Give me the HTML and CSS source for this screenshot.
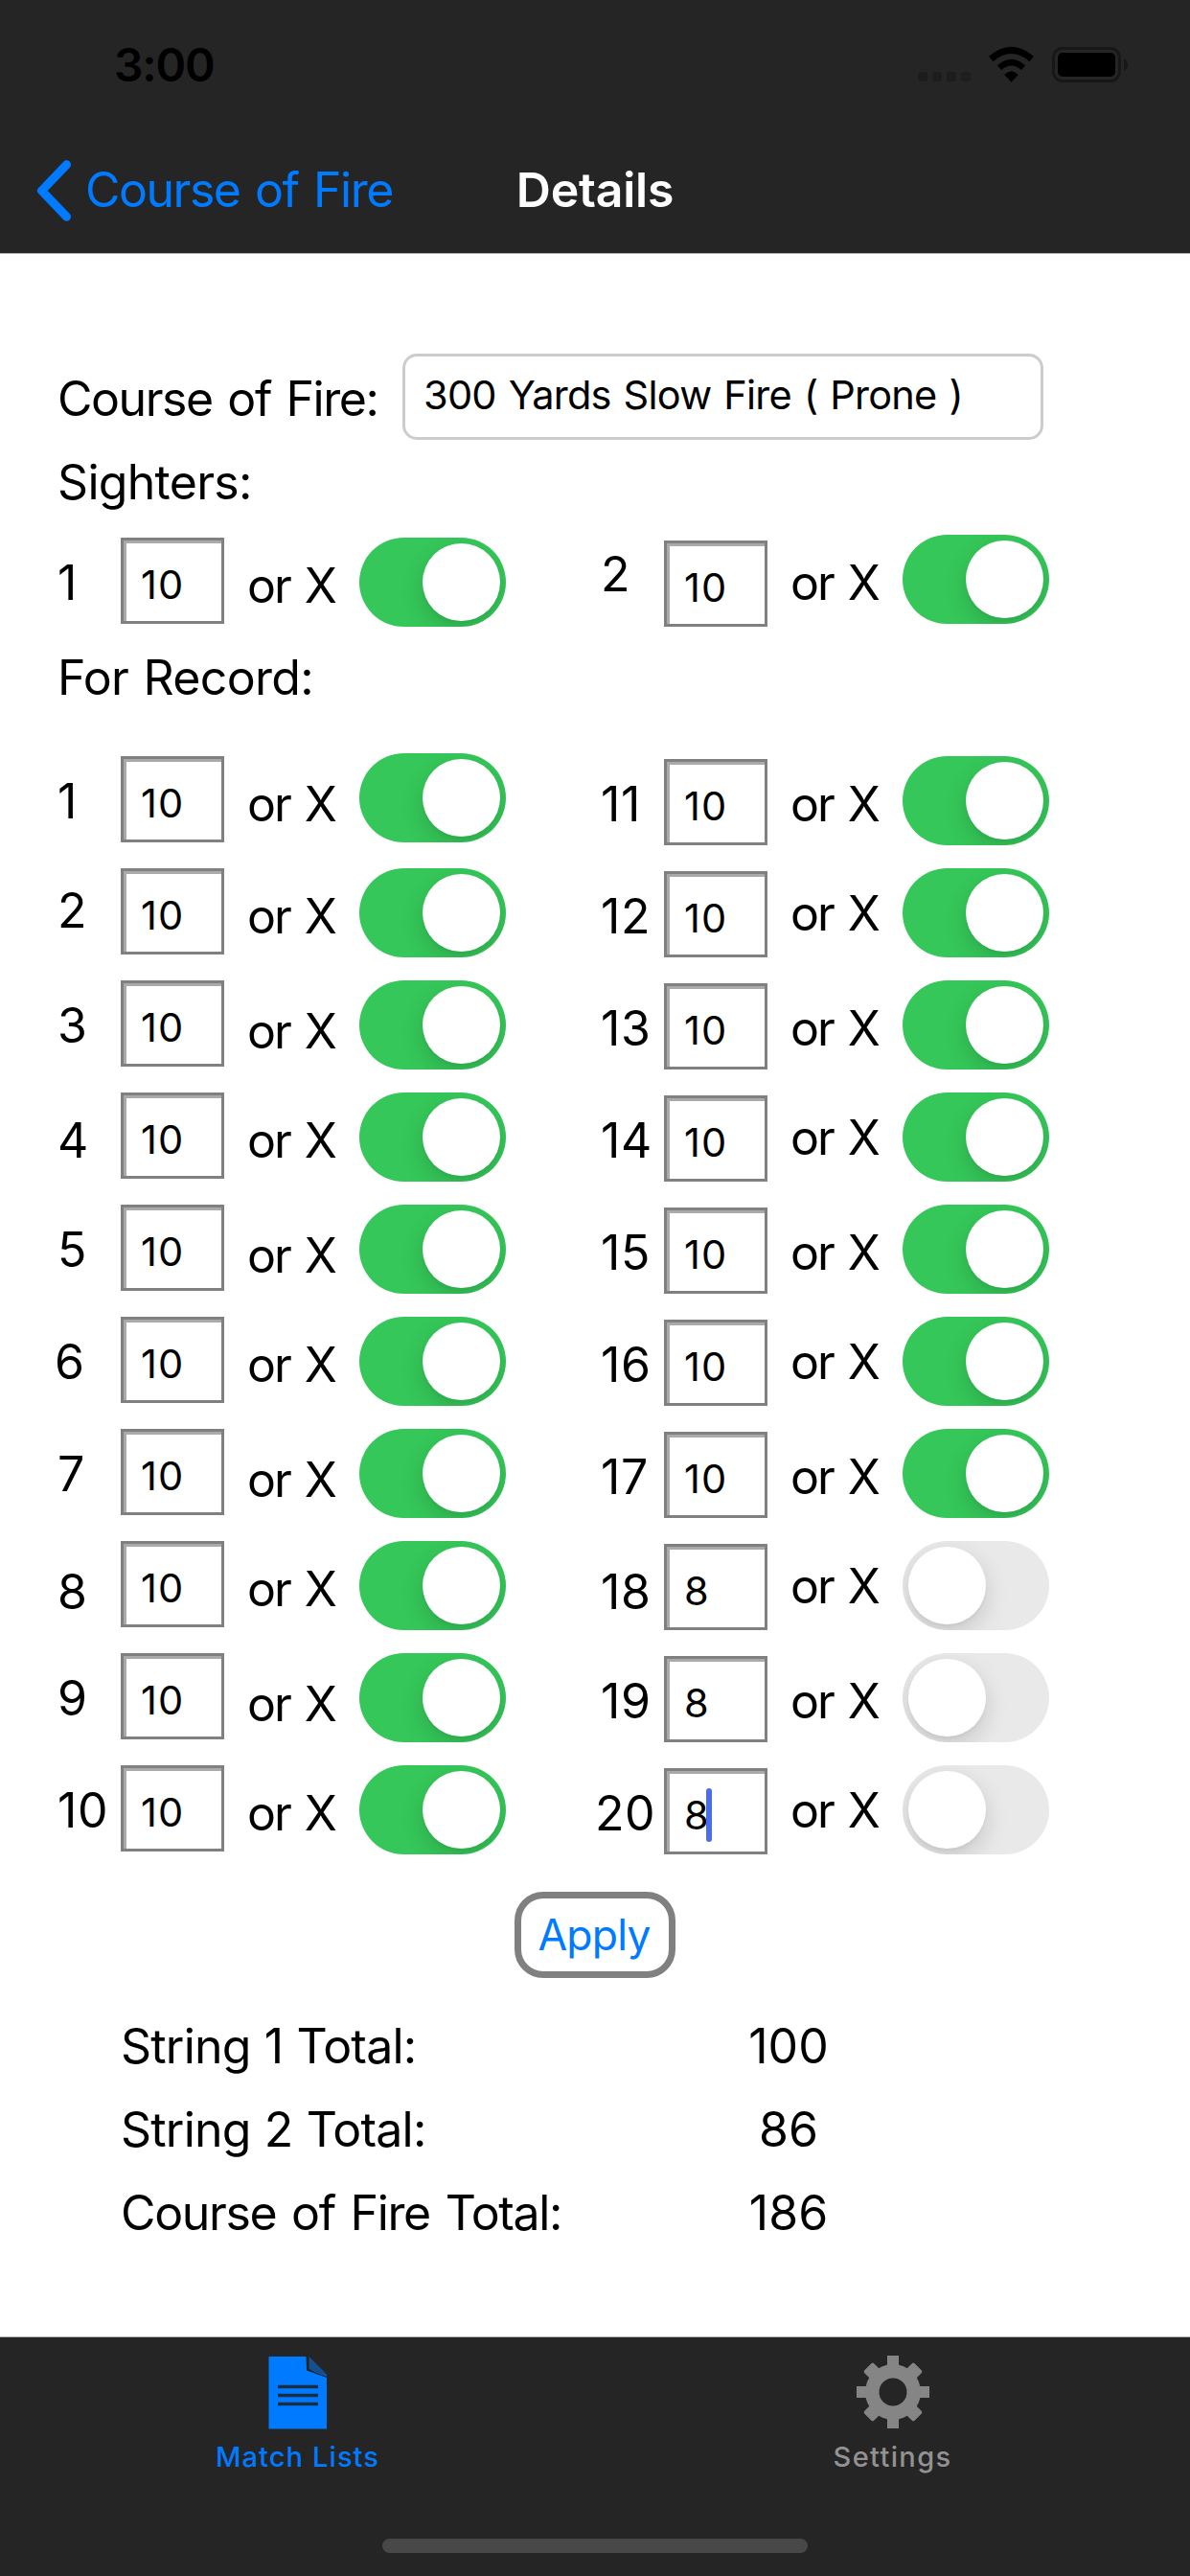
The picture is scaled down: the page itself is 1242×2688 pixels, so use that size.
FILE: index.html
```
<!DOCTYPE html>
<html lang="en">
<head>
<meta charset="utf-8">
<title>Details</title>
<link rel="stylesheet" href="styles.css">
</head>
<body>
<div class="screen">
  <header class="top">
    <div class="status">
      <span class="clock">3:00</span>
      <svg class="status-icons" width="156" height="44" viewBox="0 0 156 44">
        <g fill="#1d1d1d">
          <rect x="1" y="33" width="10" height="10" rx="3"/>
          <rect x="16" y="33" width="10" height="10" rx="3"/>
          <rect x="31" y="33" width="10" height="10" rx="3"/>
          <rect x="46" y="33" width="10" height="10" rx="3"/>
        </g>
        <path d="M98.500 43.500L91.500 36Q98.500 29.500 105.500 36Z" stroke="#000" stroke-width="0.500" stroke-linejoin="round"/>
        <path d="M86 28.700Q98.500 17.500 111 28.700" fill="none" stroke="#000" stroke-width="6.500"/>
        <path d="M77.300 19.500Q98.500 1.300 119.700 19.500" fill="none" stroke="#000" stroke-width="7"/>
      </svg>
      <svg class="battery" width="80" height="38" viewBox="0 0 80 38">
        <rect x="1.500" y="1.500" width="69" height="34" rx="9.500" fill="none" stroke="#171717" stroke-width="3"/>
        <rect x="6" y="6" width="60" height="25" rx="5"/>
        <path d="M75 12Q79 14 79 18.500Q79 23 75 25Z" fill="#171717"/>
      </svg>
    </div>
    <nav class="nav">
      <a class="back">
        <svg width="40" height="66" viewBox="0 0 40 66"><path d="M33.500 5.800L7.500 33L33.500 60.200" fill="none" stroke="#007aff" stroke-width="9" stroke-linecap="round" stroke-linejoin="round"/></svg>
        <span>Course of Fire</span>
      </a>
      <h1 class="title">Details</h1>
    </nav>
  </header>

  <main class="content">
    <div class="course">
      <label class="course-label">Course of Fire:</label>
      <div class="course-input">300 Yards Slow Fire ( Prone )</div>
    </div>
    <h2 class="heading sighters-heading">Sighters:</h2>
    <section class="columns sighters">
      <div class="col">
        <div class="shot"><span class="num">1</span><span class="field">10</span><span class="or d23">or X</span><i class="switch"></i></div>
      </div>
      <div class="col second">
        <div class="shot"><span class="num d11">2</span><span class="field">10</span><span class="or d20">or X</span><i class="switch d0"></i></div>
      </div>
    </section>
    <h2 class="heading record-heading">For Record:</h2>
    <section class="columns record">
      <div class="col">
        <div class="shot"><span class="num">1</span><span class="field">10</span><span class="or d23">or X</span><i class="switch d0"></i></div>
        <div class="shot"><span class="num d17">2</span><span class="field">10</span><span class="or d23">or X</span><i class="switch"></i></div>
        <div class="shot"><span class="num">3</span><span class="field">10</span><span class="or d26">or X</span><i class="switch"></i></div>
        <div class="shot"><span class="num d23">4</span><span class="field">10</span><span class="or d23">or X</span><i class="switch"></i></div>
        <div class="shot"><span class="num">5</span><span class="field">10</span><span class="or d26">or X</span><i class="switch"></i></div>
        <div class="shot"><span class="num out">6</span><span class="field">10</span><span class="or d23">or X</span><i class="switch"></i></div>
        <div class="shot"><span class="num">7</span><span class="field">10</span><span class="or d26">or X</span><i class="switch"></i></div>
        <div class="shot"><span class="num d26">8</span><span class="field">10</span><span class="or d23">or X</span><i class="switch"></i></div>
        <div class="shot"><span class="num">9</span><span class="field">10</span><span class="or d26">or X</span><i class="switch"></i></div>
        <div class="shot"><span class="num">10</span><span class="field">10</span><span class="or d23">or X</span><i class="switch"></i></div>
      </div>
      <div class="col second">
        <div class="shot"><span class="num d23">11</span><span class="field">10</span><span class="or d23">or X</span><i class="switch"></i></div>
        <div class="shot"><span class="num d23">12</span><span class="field">10</span><span class="or d20">or X</span><i class="switch"></i></div>
        <div class="shot"><span class="num d23">13</span><span class="field">10</span><span class="or d23">or X</span><i class="switch"></i></div>
        <div class="shot"><span class="num d23">14</span><span class="field">10</span><span class="or d20">or X</span><i class="switch"></i></div>
        <div class="shot"><span class="num d23">15</span><span class="field">10</span><span class="or d23">or X</span><i class="switch"></i></div>
        <div class="shot"><span class="num d23">16</span><span class="field">10</span><span class="or d20">or X</span><i class="switch"></i></div>
        <div class="shot"><span class="num d23">17</span><span class="field">10</span><span class="or d23">or X</span><i class="switch"></i></div>
        <div class="shot"><span class="num d26">18</span><span class="field">8</span><span class="or d20">or X</span><i class="switch off"></i></div>
        <div class="shot"><span class="num d23">19</span><span class="field">8</span><span class="or d23">or X</span><i class="switch off"></i></div>
        <div class="shot"><span class="num d23 far-out">20</span><span class="field focused">8</span><span class="or d20">or X</span><i class="switch off"></i></div>
      </div>
    </section>
    <button class="apply">Apply</button>
    <dl class="totals">
      <dt class="tight">String 1 Total:</dt><dd>100</dd>
      <dt class="tight">String 2 Total:</dt><dd>86</dd>
      <dt>Course of Fire Total:</dt><dd>186</dd>
    </dl>
  </main>

  <footer class="bottom">
    <div class="tabs">
      <a class="tab active">
        <svg width="80" height="80" viewBox="0 0 80 80">
          <path d="M9.500 2H48.500L49 16.500L70 24V77.500H9.500Z" fill="#007aff"/>
          <path d="M51.500 2L70 20.500L51.500 15Z" fill="#164f8d"/>
          <path d="M51.500 15L70 20.500V23L58 18.500Z" fill="#0b57ab"/>
          <path d="M19 33.500H61M19 42.500H61M19 51.500H61" stroke="#14345a" stroke-width="3.500"/>
          <path d="M19 33.500H61M19 42.500H61M19 51.500H61" stroke="#1f2a36" stroke-width="2"/>
        </svg>
        <span class="tab-label lists">Match Lists</span>
      </a>
      <a class="tab">
        <svg width="80" height="80" viewBox="-40 -39 80 80">
          <g fill="#858585">
            <rect x="-6" y="-38" width="12" height="76"/>
            <rect x="-38" y="-6" width="76" height="12"/>
            <rect x="-7" y="-37" width="14" height="74" rx="2" transform="rotate(45)"/>
            <rect x="-7" y="-37" width="14" height="74" rx="2" transform="rotate(-45)"/>
            <circle r="29"/>
          </g>
          <circle r="14.500" fill="#252525"/>
        </svg>
        <span class="tab-label settings">Settings</span>
      </a>
    </div>
    <div class="home-bar"></div>
  </footer>
</div>
</body>
</html>
```
FILE: styles.css
```
* { box-sizing: border-box; }

body {
  margin: 0;
  background: #fff;
  color: #000;
  font-family: Inter, "Liberation Sans", sans-serif;
  font-size: 50px;
  line-height: 60px;
}

.screen {
  width: 1242px;
  height: 2688px;
  display: flex;
  flex-direction: column;
  overflow: hidden;
}

/* Status and navigation bars */
.top {
  height: 265px;
  background: #252525;
  border-bottom: 1px solid #b2b2b2;
}
.status {
  height: 132px;
  display: flex;
  align-items: flex-start;
}
.clock {
  margin: 38px 0 0 119px;
  width: 838px;
  font-size: 48px;
  font-weight: 600;
  letter-spacing: -1.2px;
}
.status-icons { margin-top: 42px; }
.battery { margin: 49px 0 0 -15px; }
.nav {
  height: 132px;
  display: grid;
  grid-template-columns: 1fr auto 1fr;
  align-items: start;
}
.back {
  display: flex;
  padding: 34px 0 0 36px;
  color: #007aff;
  letter-spacing: -1.5px;
  word-spacing: 3px;
}
.back span { margin: 2px 0 0 13px; }
.title {
  margin: 36px 0 0;
  color: #fff;
  font-size: 50px;
  font-weight: 600;
  letter-spacing: -.2px;
}

/* Course form */
.content { flex: 1; padding-top: 104px; }
.course { display: flex; height: 90px; }
.course-label {
  width: 360px;
  margin: 17px 0 0 60px;
  letter-spacing: -1.45px;
  word-spacing: 3px;
}
.course-input {
  width: 669px;
  height: 90px;
  padding: 18px 0 0 19px;
  border: 3px solid #ccc;
  border-radius: 15px;
  font-size: 41.5px;
  line-height: 44px;
  letter-spacing: -.75px;
  word-spacing: 2px;
}
.heading {
  margin: 0 0 0 60px;
  font-size: 50px;
  font-weight: 400;
  letter-spacing: -.7px;
  word-spacing: 2px;
}
.sighters-heading { margin-top: 14px; }
.record-heading { margin-top: 23px; }

.columns { display: flex; padding-left: 60px; }
.sighters { margin-top: 25px; height: 96px; }
.record { margin-top: 49px; }
.col { width: 567px; }
.shot {
  display: flex;
  align-items: flex-start;
  height: 117px;
}
.num { width: 66px; margin-top: 20px; letter-spacing: .6px; }
.out { margin-left: -3px; width: 69px; }
.far-out { margin-left: -6px; width: 72px; }
.field {
  position: relative;
  width: 108px;
  height: 90px;
  margin-top: 3px;
  padding: 21px 0 0 18px;
  border: 3px solid #808080;
  box-shadow: inset 3px 3px 0 #aaa;
  font-size: 41.5px;
  line-height: 50px;
  letter-spacing: 1px;
}
.second .field { margin-top: 6px; }
.focused::after {
  content: "";
  position: absolute;
  left: 41px;
  top: 18px;
  width: 6px;
  height: 56px;
  border-radius: 3px;
  background: #4a6cf0;
}
.or { width: 117px; margin-left: 24px; letter-spacing: -2px; word-spacing: 3px; }
.switch {
  display: flex;
  justify-content: flex-end;
  width: 153px;
  height: 93px;
  margin-top: 3px;
  padding: 6px;
  border-radius: 47px;
  background: #35c759;
  overflow: hidden;
}
.switch::before {
  content: "";
  width: 81px;
  height: 81px;
  border-radius: 50%;
  background: #fff;
  box-shadow: 0 9px 24px rgba(0, 0, 0, .15), 0 3px 3px rgba(0, 0, 0, .03);
}
.off { justify-content: flex-start; background: #e9e9e9; }

/* Vertical position of each label inside its row */
.d0 { margin-top: 0; }
.d11 { margin-top: 11px; }
.d17 { margin-top: 17px; }
.d20 { margin-top: 20px; }
.d23 { margin-top: 23px; }
.d26 { margin-top: 26px; }

.apply {
  display: block;
  width: 168px;
  height: 90px;
  margin: 18px 0 0 537px;
  padding: 0 2px 0 0;
  border: 7px solid #808080;
  border-radius: 30px;
  background: #fff;
  color: #007aff;
  font: 44.5px/60px Inter, "Liberation Sans", sans-serif;
  letter-spacing: -.8px;
}
.totals {
  display: grid;
  grid-template-columns: 597px 200px;
  grid-auto-rows: 87px;
  margin: 41px 0 0 126px;
}
.totals dt { letter-spacing: -1.35px; word-spacing: 3px; }
.totals .tight { letter-spacing: -.8px; word-spacing: 1px; }
.totals dd { margin: 0; text-align: center; }

/* Tab bar */
.bottom {
  height: 250px;
  border-top: 1px solid #b2b2b2;
  background: #252525;
}
.tabs { display: flex; height: 210px; }
.tab {
  flex: 1;
  display: flex;
  flex-direction: column;
  align-items: center;
  padding-top: 18px;
  color: #929292;
}
.active { color: #007aff; }
.tab-label {
  font-size: 29px;
  font-weight: 500;
  line-height: 36px;
  margin-top: 9px;
}
.lists { letter-spacing: 1.1px; }
.settings { letter-spacing: 1.35px; }
.home-bar {
  width: 444px;
  height: 15px;
  margin: 0 auto;
  border-radius: 8px;
  background: #484848;
}
```
